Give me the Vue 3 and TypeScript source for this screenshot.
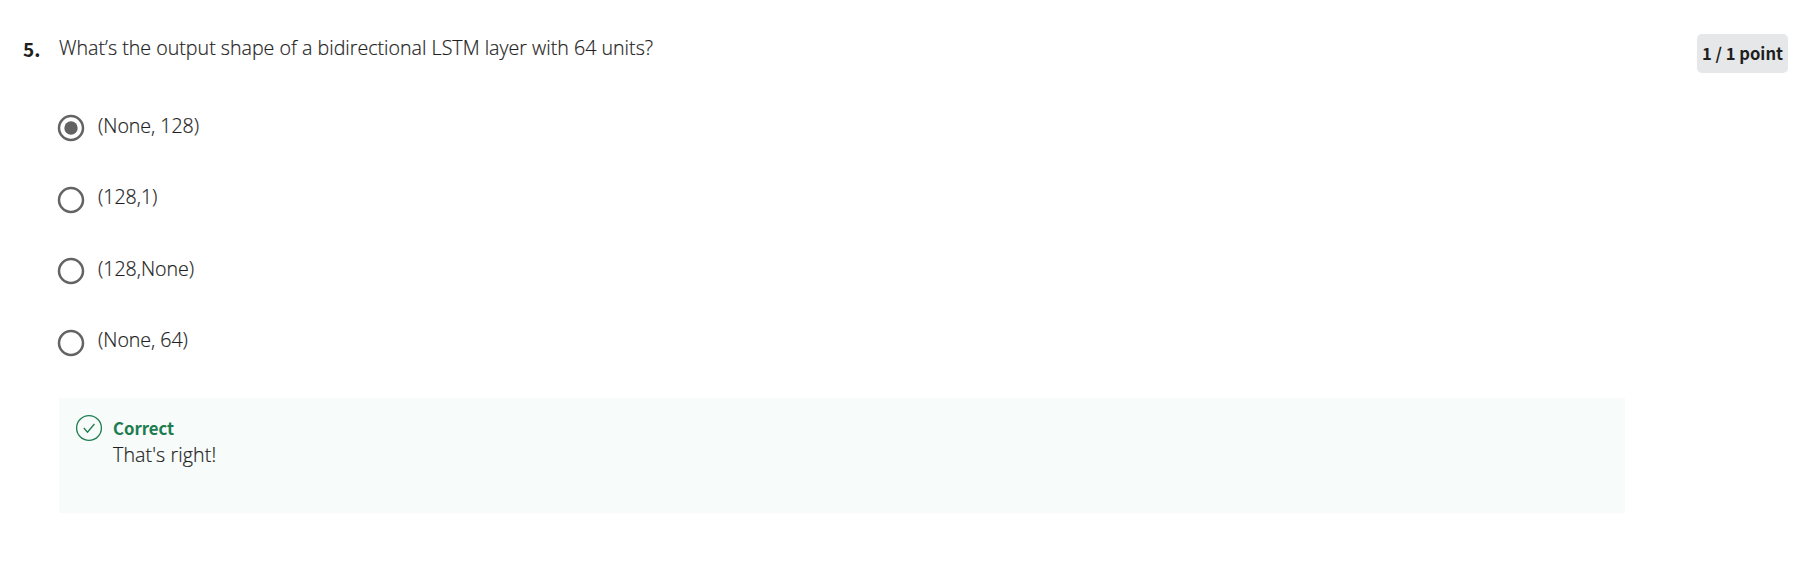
<script setup lang="ts">
import { ref } from 'vue'

const options: string[] = ['(None, 128)', '(128,1)', '(128,None)', '(None, 64)']
const selected = ref(0)
</script>

<template>
  <main class="question">
    <div class="number">5.</div>
    <section class="body">
      <p class="prompt">What’s the output shape of a bidirectional LSTM layer with 64 units?</p>
      <div class="options" role="radiogroup">
        <div v-for="(option, i) in options" :key="option" class="option" role="radio" :aria-checked="i === selected" @click="selected = i">
          <svg class="radio" viewBox="0 0 28 28">
            <circle cx="14" cy="14" r="12" fill="none" stroke="#636363" stroke-width="2.5" />
            <circle v-if="i === selected" cx="14" cy="14" r="6.7" fill="#636363" />
          </svg>
          <span class="label">{{ option }}</span>
        </div>
      </div>
      <div class="feedback">
        <svg class="check" viewBox="0 0 28 28" fill="none" stroke="#1d7c50" stroke-width="1.3">
          <circle cx="14" cy="14" r="12.4" />
          <path d="M8.8 14l3.7 4.2 6.9-8.2" />
        </svg>
        <div>
          <div class="verdict">Correct</div>
          <div class="message">That's right!</div>
        </div>
      </div>
    </section>
    <div class="points">1 / 1 point</div>
  </main>
</template>

<style>
body { background: #fff; }
</style>
<style scoped>
.question { box-sizing: border-box; width: 1816px; height: 569px; display: flex; align-items: flex-start; padding: 34px 28px 0 23px; font-family: "Open Sans", "Noto Sans", sans-serif; font-size: 19.63px; font-weight: 300; color: #1f1f1f; }
.number { width: 36px; line-height: 30px; font-family: "Noto Sans CJK SC", sans-serif; font-size: 19px; font-weight: 700; }
.body { width: 1566px; }
.prompt { margin: 0; line-height: 28px; letter-spacing: 0.01px; }
.prompt, .label, .message { -webkit-text-stroke: 0.2px #1f1f1f; }
.options { margin-top: 51px; }
.option { display: flex; height: 71.5px; }
.radio { width: 28px; height: 28px; margin: 1px 13px 0 -2px; }
.label { margin-top: 0.5px; line-height: 24px; letter-spacing: -0.05px; }
.feedback { box-sizing: border-box; height: 115px; display: flex; margin-top: -1px; padding: 16px 15.5px; background: #f7fbf9; }
.check { width: 28px; height: 28px; margin-right: 10.5px; }
.verdict { line-height: 29px; height: 28px; font-family: "Noto Sans CJK SC", sans-serif; font-size: 16.7px; font-weight: 700; color: #1d7c50; }
.message { line-height: 26px; letter-spacing: 0.1px; }
.points { box-sizing: border-box; margin-left: auto; width: 91px; height: 39px; border-radius: 5px; background: #e5e7e8; text-align: center; line-height: 39px; font-family: "Noto Sans CJK SC", sans-serif; font-size: 16.6px; font-weight: 700; white-space: nowrap; }
</style>
